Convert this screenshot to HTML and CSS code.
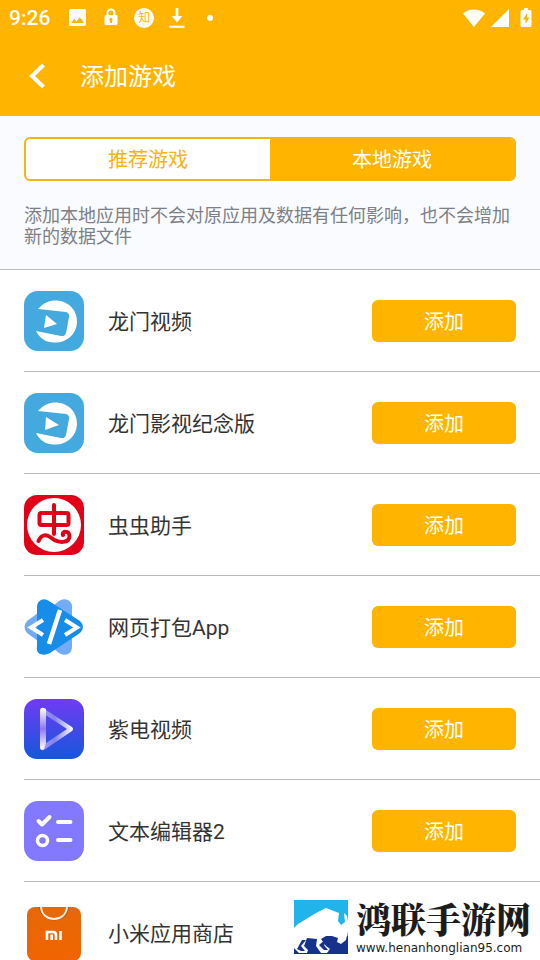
FILE: index.html
```html
<!DOCTYPE html>
<html lang="zh-CN">
<head>
<meta charset="utf-8">
<meta name="viewport" content="width=device-width, initial-scale=1">
<title>添加游戏</title>
<link rel="stylesheet" href="styles.css">
</head>
<body>
<div class="screen">
  <header class="top">
    <div class="status">
      <span class="clock">9:26</span>
      <div class="notices">
        <svg width="20" height="20" viewBox="0 0 20 20"><path fill="#fff" fill-rule="evenodd" d="M3 1h13a2 2 0 0 1 2 2v13a2 2 0 0 1-2 2H3a2 2 0 0 1-2-2V3a2 2 0 0 1 2-2zM3 15h13l-4.200-5.800-3.300 4.200-2.200-2.700z"/></svg>
        <svg width="20" height="20" viewBox="0 0 20 20"><path fill="none" stroke="#fff" stroke-width="2" d="M6.500 8V5a3.500 3.500 0 0 1 7 0v3"/><path fill="#fff" fill-rule="evenodd" d="M5 7h10q1.500 0 1.500 1.500v7Q16.500 17 15 17H5q-1.500 0-1.500-1.500v-7Q3.500 7 5 7zm5 2.800a1.700 1.700 0 0 0-1 3V15h2v-2.200a1.700 1.700 0 0 0-1-3z"/></svg>
        <span class="badge">知</span>
        <svg width="20" height="22" viewBox="0 0 20 22"><path fill="#fff" d="M8.700 1h2.600v8h4L10 15.500 4.700 9h4zM2.500 18.700h15v2h-15z"/></svg>
        <svg width="20" height="20" viewBox="0 0 20 20"><circle cx="10" cy="10" r="3" fill="#fff"/></svg>
      </div>
      <div class="signals">
        <svg width="24" height="20" viewBox="0 0 24 20"><path fill="#fff" d="M12 19 1 5.500C7 0 17 0 23 5.500z"/></svg>
        <svg width="20" height="20" viewBox="0 0 20 20"><path fill="#fff" d="M19 1v18H1z"/></svg>
        <svg width="12" height="20" viewBox="0 0 12 20"><path fill="#fff" fill-rule="evenodd" d="M4 0h4v2h2q1.500 0 1.500 1.500v14Q11.500 19 10 19H2Q.5 19 .5 17.500v-14Q.5 2 2 2h2zM7 5l-4 6.500h2.500V16l4-6.500H7z"/></svg>
      </div>
    </div>
    <div class="bar">
      <button class="back" aria-label="返回"><svg width="18" height="26" viewBox="0 0 18 26"><path fill="none" stroke="#fff" stroke-width="4" d="M15.500 2 4 13l11.500 11"/></svg></button>
      <h1>添加游戏</h1>
    </div>
  </header>

  <section class="intro">
    <div class="tabs">
      <button class="tab">推荐游戏</button>
      <button class="tab tab-on">本地游戏</button>
    </div>
    <p>添加本地应用时不会对原应用及数据有任何影响，也不会增加新的数据文件</p>
  </section>

  <ul class="apps">
    <li class="app">
      <svg class="icon" viewBox="0 0 60 60"><rect width="60" height="60" rx="14" fill="#44a9df"/><path fill="#fff" d="M14 18C20 11 27 9 33 9.500a20.800 20.800 0 0 1-2 42C23 52 16 48 12 40l25 5q4 .6 5-3l3-16q.5-4-3-5z"/><path fill="#fff" d="m22 24 11 9-13 4z"/></svg>
      <span class="name">龙门视频</span><button class="add">添加</button>
    </li>
    <li class="app">
      <svg class="icon" viewBox="0 0 60 60"><rect width="60" height="60" rx="14" fill="#44a9df"/><path fill="#fff" d="M14 18C20 11 27 9 33 9.500a20.800 20.800 0 0 1-2 42C23 52 16 48 12 40l25 5q4 .6 5-3l3-16q.5-4-3-5z"/><path fill="#fff" d="m22 24 13 8-14 5z"/></svg>
      <span class="name">龙门影视纪念版</span><button class="add">添加</button>
    </li>
    <li class="app">
      <svg class="icon" viewBox="0 0 60 60"><rect width="60" height="60" rx="13" fill="#e20019"/><circle cx="30" cy="30" r="27" fill="#fff"/><g fill="none" stroke="#e20019" stroke-width="4" stroke-linecap="round" stroke-linejoin="round"><rect x="15.500" y="18" width="29" height="12" rx="2"/><path d="M30 10v29M14.500 46c3-7 8-7 13-3 6 5 18 6 18-2 0-6-8-5-6.500-1"/></g></svg>
      <span class="name">虫虫助手</span><button class="add">添加</button>
    </li>
    <li class="app">
      <svg class="icon" viewBox="0 0 60 60"><path fill="#73acf5" d="M29 9 35 4q4-3 9-1 5 3 4 9v38q0 5-4 7-5 2-9-1l-6-5z"/><path fill="#73acf5" d="M14 16 3 24q-5 6 0 12l11 8 10-13z"/><path fill="#168de9" d="M13 10q0-5 4-7 4-2 8 1l31 20q6 6 0 12L26 56q-5 3-10 1-4-2-3-8z"/><path fill="none" stroke="#fff" stroke-width="4" d="M19 23 7 30.500 19 38M41 23l12 7.500L41 38"/><path stroke="#fff" stroke-width="4.500" d="M36 13 25 47"/></svg>
      <span class="name">网页打包App</span><button class="add">添加</button>
    </li>
    <li class="app">
      <svg class="icon" viewBox="0 0 60 60"><defs><linearGradient id="violet" x2="0" y2="1"><stop stop-color="#713bf4"/><stop offset="1" stop-color="#1557db"/></linearGradient><linearGradient id="edgeL" x2="0" y2="1"><stop stop-color="#fff"/><stop offset=".5" stop-color="#8f78f0"/><stop offset="1" stop-color="#fff"/></linearGradient><linearGradient id="edgeR"><stop stop-color="#a993fa"/><stop offset=".45" stop-color="#8583ef"/><stop offset="1" stop-color="#fff"/></linearGradient></defs><rect width="60" height="60" rx="13" fill="url(#violet)"/><path fill="url(#edgeR)" d="m19 9 29 19q2 2 0 4L20 51q-4 1-4-3l27-18-26-17z"/><path fill="url(#edgeL)" d="M16 11q1-4 6-1v34l-2 6q-4 2-4-2z"/></svg>
      <span class="name">紫电视频</span><button class="add">添加</button>
    </li>
    <li class="app">
      <svg class="icon" viewBox="0 0 60 60"><rect width="60" height="60" rx="14" fill="#8379ff"/><g fill="none" stroke="#fff" stroke-width="4" stroke-linecap="round" stroke-linejoin="round"><path d="m14.500 20 3.500 3.500 7.500-7.500M34 21h12.500M34 39h12.500"/><circle cx="18.500" cy="39.500" r="5" stroke-width="3.500"/></g></svg>
      <span class="name">文本编辑器2</span><button class="add">添加</button>
    </li>
    <li class="app">
      <svg class="icon" viewBox="0 0 60 60"><defs><linearGradient id="bag" x2="0" y2="1"><stop stop-color="#e66808"/><stop offset="1" stop-color="#f06400"/></linearGradient></defs><rect x="3" y="4" width="54" height="54" rx="8" fill="url(#bag)"/><path fill="#c94e00" d="M15 4h30c-1 18-28 18-30 0z"/><path fill="#e66808" stroke="#fff0df" stroke-width="2" d="M17 4c1 16 25 16 26 0"/><path fill="none" stroke="#fff" stroke-width="2.600" d="M23 37v-8h6q3 0 3 3v5M27.700 31.500V37M36.500 28v9"/></svg>
      <span class="name">小米应用商店</span>
    </li>
  </ul>

  <aside class="site">
    <svg class="site-logo" viewBox="0 0 54 54"><path fill="#20b4ea" d="M0 0h54v54H0z"/><path fill="#17328a" d="M0 36h54v18H0z"/><path fill="#fff" d="M0 28 4 24l18-11 10-5 13 5-1 8 3 4 4-3-1-9 3 3 1 6v9l-2 9-5 4-4-2 1-4-6-2h-6l-5 3 5 7 4 3-3 4h-6l-5-7 1-7-10-1-3 8 4 4-1 3H5l-5-5z"/><path fill="#17328a" d="m3 49 5-9h4l-5 6 4 5H7zM25 45l7-6h4l-6 6 4 5h-4z"/></svg>
    <div class="site-text"><strong>鸿联手游网</strong><span>www.henanhonglian95.com</span></div>
  </aside>
</div>
</body>
</html>
```
FILE: styles.css
```css
* { box-sizing: border-box; }

body {
  margin: 0;
  background: #fff;
  color: #333;
  font-family: Roboto, "Noto Sans CJK SC", sans-serif;
}

button {
  margin: 0;
  padding: 0;
  border: 0;
  background: none;
  color: inherit;
  font: inherit;
}

svg { display: block; flex: none; }

.screen {
  position: relative;
  display: flex;
  flex-direction: column;
  height: 100vh;
  overflow: hidden;
}

.top { flex: none; background: #ffb400; color: #fff; }

.status {
  display: flex;
  align-items: center;
  height: 36px;
  padding: 0 8px 0 9px;
}

.clock { font-size: 21px; font-weight: 500; line-height: 24px; }

.notices { display: flex; align-items: center; gap: 13px; margin-left: 18px; }

.badge {
  width: 20px;
  height: 20px;
  border-radius: 50%;
  background: #fff;
  color: #ffb400;
  font-size: 12px;
  line-height: 20px;
  text-align: center;
}

.signals { display: flex; align-items: center; gap: 4px; margin-left: auto; }
.signals svg:last-child { margin-left: 6px; }

.bar { display: flex; align-items: center; height: 80px; padding-left: 28px; }

.back { width: 52px; height: 44px; display: flex; align-items: center; }

h1 { margin: 0; padding-top: 2px; font-size: 24px; font-weight: 400; line-height: 32px; }

.intro {
  flex: none;
  padding: 21px 24px 22px;
  border-bottom: 1px solid #bbb;
  background: #fafbfe;
}

.tabs {
  display: flex;
  height: 44px;
  overflow: hidden;
  border: 2px solid #f4b416;
  border-radius: 6px;
  background: #fff;
}

.tab { flex: 1; padding-top: 2px; color: #f4b416; font-size: 20px; line-height: 38px; }
.tab-on { background: #ffb400; color: #fff; }

.intro p {
  margin: 24px 0 0;
  color: #7c8087;
  font-size: 18px;
  line-height: 21px;
}

.apps { flex: 1; margin: 0; padding: 0; list-style: none; }

.app {
  display: flex;
  align-items: center;
  height: 102px;
  margin-left: 24px;
  padding-right: 24px;
  border-bottom: 1px solid #bbb;
}

.icon { width: 60px; height: 60px; }

.name { flex: 1; margin-left: 24px; padding-top: 2px; font-size: 21px; line-height: 30px; }

.add {
  width: 144px;
  height: 42px;
  padding-top: 2px;
  border-radius: 6px;
  background: #ffb400;
  color: #fff;
  font-size: 20px;
  line-height: 40px;
}

.site {
  position: absolute;
  right: 0;
  bottom: 0;
  display: flex;
  align-items: flex-start;
  gap: 8px;
  padding: 0 9px 0 8px;
  background: #fff;
  color: #1c1c1c;
}

.site-logo { width: 54px; height: 54px; margin-top: 4px; }

.site-text { display: flex; flex-direction: column; }

.site-text strong {
  font-family: "Noto Serif CJK SC", "Noto Sans CJK SC", serif;
  font-size: 35px;
  font-weight: 900;
  line-height: 44px;
}

.site-text span {
  padding-bottom: 4px;
  font-family: "DejaVu Sans", sans-serif;
  font-size: 12px;
  line-height: 16px;
}
```
